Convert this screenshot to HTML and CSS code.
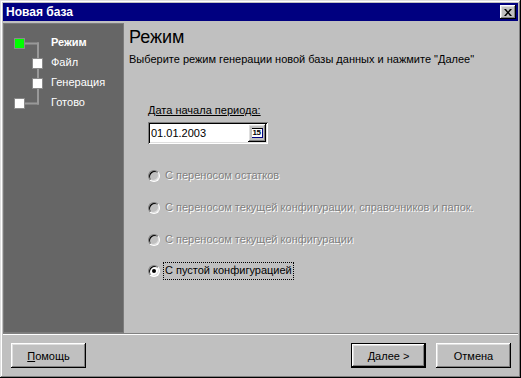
FILE: index.html
```html
<!DOCTYPE html>
<html lang="ru">
	<head>
		<title>Новая база</title>
		<meta charset="utf-8">
		<link rel="stylesheet" href="styles.css">
	</head>

	<body>

	<div class="window">
		<div class="titlebar">
			<span class="title">Новая база</span>
			<button type="button" class="close">
				<svg width="8" height="7" viewBox="0 0 8 7">
					<path d="M0 0h2l2 2.5L6 0h2L5 3.5 8 7H6L4 4.5 2 7H0l3-3.5z" fill="#000"/>
				</svg>
			</button>
		</div>

		<div class="body">
			<div class="steps">
				<svg class="tree" width="46" height="74" viewBox="0 0 46 74">
					<rect x="18" y="5.5" width="16" height="2" fill="#999"/>
					<rect x="32" y="5.5" width="2" height="62" fill="#999"/>
					<rect x="18" y="65.5" width="16" height="2" fill="#999"/>
					<rect x="9.5" y="1.5" width="10" height="10" fill="#00ff00" stroke="#8a8a8a"/>
					<rect x="27.5" y="21.5" width="10" height="10" fill="#fff" stroke="#8a8a8a"/>
					<rect x="27.5" y="41.5" width="10" height="10" fill="#fff" stroke="#8a8a8a"/>
					<rect x="9.5" y="61.5" width="10" height="10" fill="#fff" stroke="#8a8a8a"/>
				</svg>
				<ul class="step-list">
					<li class="current">Режим</li>
					<li>Файл</li>
					<li>Генерация</li>
					<li>Готово</li>
				</ul>
			</div>

			<div class="main">
				<h1>Режим</h1>
				<p class="hint">Выберите режим генерации новой базы данных и нажмите "Далее"</p>

				<div class="date-block">
					<label class="date-label" for="start-date">Дата начала периода:</label>
					<div class="date-field">
						<input type="text" id="start-date" value="01.01.2003">
						<button type="button" class="cal-btn"><span class="cal-icon">15</span></button>
					</div>
				</div>

				<div class="options">
					<div class="option disabled">
						<span class="radio"></span>
						<span class="option-text">С переносом остатков</span>
					</div>
					<div class="option disabled">
						<span class="radio"></span>
						<span class="option-text">С переносом текущей конфигурации, справочников и папок.</span>
					</div>
					<div class="option disabled">
						<span class="radio"></span>
						<span class="option-text">С переносом текущей конфигурации</span>
					</div>
					<div class="option checked">
						<span class="radio"></span>
						<span class="option-text focused">С пустой конфигурацией</span>
					</div>
				</div>
			</div>
		</div>

		<div class="separator"></div>

		<div class="footer">
			<button type="button" class="btn"><u>П</u>омощь</button>
			<div class="footer-right">
				<button type="button" class="btn default"><u>Д</u>алее &gt;</button>
				<button type="button" class="btn">Отмена</button>
			</div>
		</div>
	</div>

	</body>
</html>
```

FILE: styles.css
```css
* {
	box-sizing: border-box;
}

html, body {
	margin: 0;
	padding: 0;
	background-color: #c0c0c0;
}

body {
	font-family: 'Liberation Sans', Arial, sans-serif;
	font-size: 11px;
	color: #000;
}

.window {
	width: 521px;
	height: 378px;
	padding: 3px;
	background-color: #c0c0c0;
	box-shadow: inset -1px -1px #000, inset 1px 1px #dfdfdf, inset -2px -2px #808080, inset 2px 2px #fff;
	display: flex;
	flex-direction: column;
}

/* Title bar */
.titlebar {
	height: 18px;
	margin-bottom: 2px;
	background-color: #000080;
	display: flex;
	align-items: center;
	justify-content: space-between;
	padding: 0 2px 0 3px;
}

.title {
	color: #fff;
	font-weight: bold;
	font-size: 12px;
}

.close {
	width: 16px;
	height: 14px;
	padding: 0;
	border: none;
	background-color: #c0c0c0;
	box-shadow: inset -1px -1px #000, inset 1px 1px #fff, inset -2px -2px #808080, inset 2px 2px #dfdfdf;
	display: flex;
	align-items: center;
	justify-content: center;
}

/* Body */
.body {
	height: 310px;
	display: flex;
}

.steps {
	width: 121px;
	background-color: #666;
	border: 1px solid #7c7c7c;
	display: flex;
	align-items: flex-start;
	padding-top: 8px;
}

.tree {
	margin-top: 5px;
	margin-left: 1px;
	flex-shrink: 0;
}

.step-list {
	list-style: none;
	margin: 0;
	padding: 0;
}

.step-list li {
	height: 20px;
	line-height: 20px;
	color: #fff;
}

.step-list .current {
	font-weight: bold;
}

.main {
	flex: 1;
	padding: 3px 0 0 5px;
}

h1 {
	margin: 0;
	font-size: 18px;
	font-weight: normal;
	line-height: 22px;
}

.hint {
	margin: 5px 0 0;
	line-height: 13px;
}

/* Date */
.date-block {
	margin: 38px 0 0 19px;
}

.date-label {
	display: block;
	line-height: 13px;
	text-decoration: underline;
}

.date-field {
	width: 120px;
	height: 22px;
	margin-top: 5px;
	padding: 2px;
	background-color: #fff;
	box-shadow: inset 1px 1px #808080, inset -1px -1px #fff, inset 2px 2px #000, inset -2px -2px #dfdfdf;
	display: flex;
}

.date-field input {
	flex: 1;
	min-width: 0;
	border: none;
	outline: none;
	padding: 0 0 0 1px;
	font-family: 'Liberation Sans', Arial, sans-serif;
	font-size: 11px;
	background: transparent;
}

.cal-btn {
	width: 18px;
	height: 18px;
	padding: 0;
	border: none;
	background-color: #c0c0c0;
	box-shadow: inset -1px -1px #000, inset 1px 1px #fff, inset -2px -2px #808080, inset 2px 2px #dfdfdf;
	display: flex;
	align-items: center;
	justify-content: center;
}

.cal-icon {
	display: block;
	width: 11px;
	height: 10px;
	background-color: #fff;
	border-right: 1px solid #000080;
	border-bottom: 1px solid #000080;
	border-top: 1px solid #000;
	font-size: 8px;
	line-height: 8px;
	font-weight: bold;
	color: #000;
	text-align: center;
	letter-spacing: -0.5px;
}

/* Options */
.options {
	margin: 22px 0 0 19px;
	display: flex;
	flex-direction: column;
	gap: 12px;
}

.option {
	height: 20px;
	display: flex;
	align-items: center;
}

.option:last-child {
	margin-top: -1px;
}

.radio {
	width: 12px;
	height: 12px;
	border-radius: 50%;
	background-color: #fff;
	border: 1px solid;
	border-color: #808080 #fff #fff #808080;
	box-shadow: inset 1px 1px #000, inset -1px -1px #dfdfdf;
	display: flex;
	align-items: center;
	justify-content: center;
	flex-shrink: 0;
}

.disabled .radio {
	background-color: #c0c0c0;
}

.checked .radio::after {
	content: "";
	width: 4px;
	height: 4px;
	border-radius: 50%;
	background-color: #000;
}

.option-text {
	margin-left: 3px;
	padding: 1px 1px 2px;
	border: 1px dotted transparent;
	line-height: 13px;
}

.disabled .option-text {
	color: #808080;
	text-shadow: 1px 1px 0 #fff;
}

.option-text.focused {
	border-color: #000;
}

/* Footer */
.separator {
	height: 2px;
	border-top: 1px solid #808080;
	border-bottom: 1px solid #fff;
}

.footer {
	flex: 1;
	padding: 8px 7px 0 8px;
	display: flex;
	justify-content: space-between;
	align-items: flex-start;
}

.footer-right {
	display: flex;
	gap: 10px;
}

.btn {
	width: 75px;
	height: 25px;
	padding: 0;
	border: none;
	background-color: #c0c0c0;
	font-family: 'Liberation Sans', Arial, sans-serif;
	font-size: 11px;
	color: #000;
	box-shadow: inset -1px -1px #000, inset 1px 1px #fff, inset -2px -2px #808080, inset 2px 2px #dfdfdf;
}

.btn.default {
	box-shadow: inset 0 0 0 1px #000, inset -2px -2px #000, inset 2px 2px #fff, inset -3px -3px #808080, inset 3px 3px #dfdfdf;
}
```
